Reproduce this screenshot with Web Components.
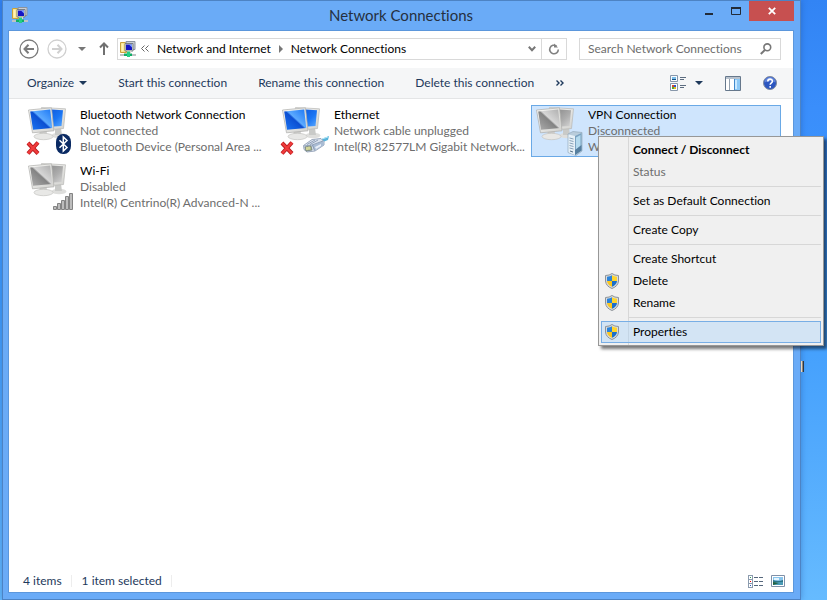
<!DOCTYPE html>
<html lang="en">
<head>
<meta charset="utf-8">
<title>Network Connections</title>
<style>
  html, body { height: 100%; }
  body {
    margin: 0;
    font: 12px/16px Lato, "Open Sans", sans-serif;
    font-variant-ligatures: none;
    color: #000;
    background: linear-gradient(180deg, #3284f4 0%, #3a8efb 18%, #3f9cfd 50%, #52aafd 75%, #66bbff 100%);
    overflow: hidden;
    --frame: #6aabf7;
    --line: #d9d9d9;
    --ink: #1e395b;
    --muted: #6d6d6d;
  }
  desktop-area { height: 100%; }
</style>
</head>
<body>
<desktop-area>
  <network-window>
    <title-bar slot="title">Network Connections</title-bar>
    <address-bar slot="nav" parent="Network and Internet" current="Network Connections"></address-bar>
    <command-bar slot="commands">
      <tool-button arrow>Organize</tool-button>
      <tool-button>Start this connection</tool-button>
      <tool-button>Rename this connection</tool-button>
      <tool-button>Delete this connection</tool-button>
      <tool-button slot="more" label="More commands"><ui-icon name="more"></ui-icon></tool-button>
      <tool-button slot="end" arrow label="Change your view"><ui-icon name="view"></ui-icon></tool-button>
      <tool-button slot="end" label="Preview pane"><ui-icon name="pane"></ui-icon></tool-button>
      <tool-button slot="end" label="Help"><ui-icon name="help"></ui-icon></tool-button>
    </command-bar>
    <connection-tile icon="on" badge="bluetooth" error>
      Bluetooth Network Connection
      <span slot="status">Not connected</span>
      <span slot="device">Bluetooth Device (Personal Area ...</span>
    </connection-tile>
    <connection-tile icon="on" badge="cable" error>
      Ethernet
      <span slot="status">Network cable unplugged</span>
      <span slot="device">Intel(R) 82577LM Gigabit Network...</span>
    </connection-tile>
    <connection-tile icon="off" badge="server" selected>
      VPN Connection
      <span slot="status">Disconnected</span>
      <span slot="device">W</span>
    </connection-tile>
    <connection-tile icon="off" badge="signal">
      Wi-Fi
      <span slot="status">Disabled</span>
      <span slot="device">Intel(R) Centrino(R) Advanced-N ...</span>
    </connection-tile>
    <status-bar slot="status"><span>4 items</span><span>1 item selected</span></status-bar>
  </network-window>
  <context-menu slot="menu">
    <menu-entry primary>Connect / Disconnect</menu-entry>
    <menu-entry disabled>Status</menu-entry>
    <menu-rule></menu-rule>
    <menu-entry>Set as Default Connection</menu-entry>
    <menu-rule></menu-rule>
    <menu-entry>Create Copy</menu-entry>
    <menu-rule></menu-rule>
    <menu-entry>Create Shortcut</menu-entry>
    <menu-entry shield>Delete</menu-entry>
    <menu-entry shield>Rename</menu-entry>
    <menu-rule></menu-rule>
    <menu-entry shield active>Properties</menu-entry>
  </context-menu>
</desktop-area>

<script>
const ICONS = {
  app: [16, 16, `
    <path d="M0.500 1.500h5l1 1v9h-6z" fill="#f6df83" stroke="#c9a23a"/>
    <path d="M1.500 2.500h2v8h-2z" fill="#fff3b4"/>
    <path d="M6 .5h9v8H7z" fill="#c9ced6" stroke="#8d949e"/>
    <path d="M5 2.500h8v7.500H5z" fill="#e8e9dc" stroke="#777f87"/>
    <path d="M6 3.500h6v5.500h-6z" fill="#1515c4"/><path d="M9 3.500h3v3z" fill="#7aa0ff"/>
    <path d="M7 10h4v2H7z" fill="#d8d8cf"/>
    <path d="M0 13h16v2H0z" fill="#bfc2c4"/><path d="M4 12.500h8v2.500H4z" fill="#0fae66"/><path d="M7 10.500h3v5.500h-3z" fill="#24cf84"/>`],
  back: [20, 20, `<circle cx="10" cy="10" r="9" fill="none" stroke="#7b7b7b" stroke-width="1.300"/><path d="M15 10H6M9.500 5.800L5.500 10l4 4.200" fill="none" stroke="#7b7b7b" stroke-width="2"/>`],
  forward: [20, 20, `<circle cx="10" cy="10" r="9" fill="none" stroke="#d0d0d0" stroke-width="1.300"/><path d="M5 10h9M10.500 5.800l4 4.200-4 4.200" fill="none" stroke="#d0d0d0" stroke-width="2"/>`],
  down: [8, 4, `<path d="M0 0h8L4 4z" fill="currentColor"/>`],
  up: [10, 13, `<path d="M5 13V2M1 5.500L5 1.500l4 4" fill="none" stroke="#707070" stroke-width="2"/>`],
  chevrons: [8, 7, `<path d="M3.500 .5l-3 3 3 3M7.500 .5l-3 3 3 3" fill="none" stroke="#666" stroke-width="1"/>`],
  crumb: [4, 8, `<path d="M0 0l4 4-4 4z" fill="#777"/>`],
  expand: [8, 6, `<path d="M.8 .8L4 4.200 7.200 .8" fill="none" stroke="#777" stroke-width="2"/>`],
  refresh: [12, 12, `<path d="M8.500 3A4.300 4.300 0 1 0 10.300 6.500" fill="none" stroke="#808080" stroke-width="1.600"/><path d="M6 .5v4h4z" fill="#808080"/>`],
  search: [12, 12, `<circle cx="7.300" cy="4.300" r="3.400" fill="none" stroke="#777" stroke-width="1.600"/><path d="M5 6.800L.8 11" stroke="#777" stroke-width="2"/>`],
  more: [8, 6, `<path d="M.5 .5L3 3 .5 5.500M4.500 .5L7 3 4.500 5.500" fill="none" stroke="#1e395b" stroke-width="1.400"/>`],
  view: [16, 16, `
    <path d="M.5 .5h7v6h-7z" fill="#f8fbff" stroke="#8797aa"/><path d="M2 2h4v2H2z" fill="#78bdea"/><path d="M2 4h4v1H2z" fill="#185486"/>
    <path d="M.5 8.500h7v7h-7z" fill="#fff" stroke="#8797aa"/><path d="M2 10h2v2H2z" fill="#d34a2e"/><path d="M4 10h2v2H4z" fill="#2f56c9"/><path d="M2 12h2v2H2z" fill="#57a536"/><path d="M4 12h2v2H4z" fill="#e5bd25"/>
    <path d="M10 2.500h6M10 4.500h4M10 10.500h6M10 12.500h4" stroke="#5c6c80"/>`],
  pane: [16, 15, `<path d="M.5 .5h15v14H.5z" fill="#fff" stroke="#66788c"/><path d="M1 1h14v2H1z" fill="#b8c2cd"/><path d="M4.500 3v11" stroke="#93a0ae"/><path d="M9 3h6v11H9z" fill="#8cc8f6"/><path d="M9.500 3v11" stroke="#4289cc"/><path d="M10 4h2v9h-2z" fill="#cae9ff"/>`],
  help: [14, 14, `<circle cx="7" cy="7" r="6.500" fill="#2c56c0" stroke="#7e899d"/><path d="M1.500 6.500a5.500 5.500 0 0 1 11 0Q7 4 1.500 6.500z" fill="#5f83da"/><path d="M4.800 5.400c0-3 4.600-3 4.600-.2C9.400 6.800 7.200 6.900 7.200 8.800M7.200 10v1.700" fill="none" stroke="#fff" stroke-width="1.600"/>`],
  minimize: [8, 10, `<path d="M0 7h8v2H0z" fill="#222b38"/>`],
  maximize: [10, 10, `<path d="M.5 1v7.500h9V1" fill="none" stroke="#222b38"/><path d="M0 1h10v2H0z" fill="#222b38"/>`],
  close: [8, 8, `<path d="M.8 .8l6.400 6.400M7.200 .8L.8 7.200" stroke="#fff" stroke-width="1.800"/>`],
  details: [15, 13, `
    <g fill="#fff" stroke="#8b9bae"><rect x=".5" y=".5" width="4" height="4"/><rect x=".5" y="4.500" width="4" height="4"/><rect x=".5" y="8.500" width="4" height="4"/></g>
    <path d="M2 2h1v1H2z" fill="#2f9b4b"/><path d="M2 6h1v1H2z" fill="#e00"/><path d="M2 10h1v1H2z" fill="#2358c4"/>
    <path d="M6 2.500h4M11 2.500h4M6 6.500h4M11 6.500h4M6 10.500h4M11 10.500h4" stroke="#56677c"/>`],
  large: [14, 12, `<path d="M.5 .5h13v11H.5z" fill="#fff" stroke="#7f90a8"/><path d="M2 2h10v8H2z" fill="#89c5ed"/><path d="M3 3h5v2H3z" fill="#e3f5ff"/><path d="M2 5q5 2 10 0v2H2z" fill="#2b7488"/><path d="M2 7h10v3H2z" fill="#4a9ab5"/><path d="M2 7l6 1-6 2z" fill="#23613f"/>`],
  shield: [14, 16, `
    <path d="M7 .5Q9.500 2.500 13.500 2.500V8Q13 13.300 7 15.500 1 13.300 .5 8V2.500Q4.500 2.500 7 .5z" fill="#d8dbdd" stroke="#8c9298"/>
    <path d="M7 2.300V8H2V3.800Q5 3.700 7 2.300z" fill="#2b83da"/><path d="M7 2.300V8h5V3.800Q9 3.700 7 2.300z" fill="#ffd52c"/>
    <path d="M2 8h5v5.800Q2.300 11.700 2 8z" fill="#fbc61d"/><path d="M12 8H7v5.800Q11.700 11.700 12 8z" fill="#1b6fcb"/>`],
  cross: [14, 14, `<path d="M2 2l10 10.500M12 1.500L2 12.500" stroke="#b81a1e" stroke-width="4"/><path d="M2 2l10 10.500M12 1.500L2 12.500" stroke="#f03c3c" stroke-width="2.400"/>`],
  bluetooth: [15, 20, `<rect width="15" height="20" rx="7" ry="8" fill="#0a2a63"/><path d="M3.500 6.200l7.500 7.300-3.700 3.500V3l3.700 3.500-7.500 7.300" fill="none" stroke="#fff" stroke-width="1.500"/>`],
  cable: [27, 18, `
    <path d="M18 4l4-2 5-2-1 4-5 2z" fill="#57b5dc"/><path d="M20 3l6-2" stroke="#b3e4f5"/>
    <path d="M1.500 9.500L10 3.500l9-1 3 3v3.500L13 15l-8 1-3-2.500z" fill="#dce4ef" stroke="#8796ad" stroke-width=".8"/>
    <path d="M10 9.500L21.500 5 22 9l-9.500 5.500z" fill="#a9bcd4"/>
    <path d="M2 10l8-1 11-4M10.500 9l2 5.500M5 8.500l8-4.500M8 8.500l8-4.500" fill="none" stroke="#7d90ab" stroke-width=".8"/>
    <path d="M3 11l6-1 1 4-6 1z" fill="#b1bd8b" stroke="#6d7b78" stroke-width=".8"/><path d="M5 11v3M7 10.500v3" stroke="#f2eeaa"/>
    <path d="M13 11l6-3v2l-5 3z" fill="#e8eff8"/>`],
  server: [16, 25, `
    <path d="M1 3l5-2.500 9 1V20l-6 4.500-8-3z" fill="#b9cddc" stroke="#93a9ba" stroke-width=".7"/>
    <path d="M1.500 3.500L8 5v19l-6.500-2.800z" fill="#e6f0f7"/><path d="M8 5l6.500-3v17.500L8 24z" fill="#7ba3c1"/>
    <path d="M9 6.500L13.500 4v11L9 20z" fill="#b4daee"/><path d="M8 19l6.500-5v5.500L8 24z" fill="#567f9f"/>
    <path d="M2.500 7l4 1M2.500 9.500l4 1M2.500 12l4 1M2.500 14.500l4 1M2.500 17l4 1" stroke="#7f9bb1" stroke-width=".9"/>
    <path d="M3 19.500l3 1v1l-3-1z" fill="#4d6980"/>`],
  signal: [21, 18, `<g fill="#bdbdbd" stroke="#848484"><path d="M.5 14.500h3v3h-3z"/><path d="M4.500 11.500h3v6h-3z"/><path d="M8.500 8.500h3v9h-3z"/><path d="M12.500 4.500h3v13h-3z"/><path d="M16.500 1.500h3v16h-3z"/></g>`],
};

const monitors = (dark, mid, light) => `
  <defs>
    <linearGradient id="s" x1="0" y1="1" x2="1" y2="0"><stop offset="0" stop-color="${mid}"/><stop offset=".48" stop-color="${dark}"/><stop offset=".54" stop-color="${light}"/><stop offset="1" stop-color="${mid}"/></linearGradient>
    <linearGradient id="r" x1="0" y1="0" x2="1" y2="1"><stop offset="0" stop-color="${dark}"/><stop offset=".6" stop-color="${mid}"/><stop offset="1" stop-color="${light}"/></linearGradient>
    <linearGradient id="f" x1="0" y1="0" x2="1" y2="1"><stop offset="0" stop-color="#f8f8f6"/><stop offset="1" stop-color="#d2d2cf"/></linearGradient>
  </defs>
  <ellipse cx="31" cy="28.500" rx="7.500" ry="2.800" fill="#dededc"/>
  <path d="M27 21h6l1 7h-7z" fill="#c9cac8"/>
  <path d="M13.500 .5L37.500 1.800 35.500 21.500l-18 1.500z" fill="url(#f)" stroke="#b8b8b5" stroke-width=".7"/>
  <path d="M16 2l19 1.300L33.500 19l-15 1z" fill="url(#r)"/>
  <path d="M11.500 24h7l1 5h-8z" fill="#cdcdcb"/>
  <ellipse cx="15.500" cy="29.500" rx="9.500" ry="3.200" fill="#e8e8e6" stroke="#c4c4c2" stroke-width=".7"/>
  <path d="M.5 3L23.500 .8l2.500 23-21.500 2z" fill="url(#f)" stroke="#aeaeab" stroke-width=".7"/>
  <path d="M2.200 4.500L22.200 2.600l2 18.400-19.200 1.700z" fill="url(#s)"/>`;
ICONS.on = [39, 35, monitors('#0c4fd2', '#1b76f4', '#5caaff')];
ICONS.off = [39, 35, monitors('#838383', '#adadad', '#d6d6d6')];

function define(name, html) {
  customElements.define(name, class extends HTMLElement {
    constructor() {
      super();
      this.attachShadow({ mode: 'open' });
    }
    connectedCallback() {
      if (this.shadowRoot.childNodes.length) return;
      const template = document.createElement('template');
      template.innerHTML = typeof html === 'function' ? html(this) : html;
      this.shadowRoot.append(template.content.cloneNode(true));
    }
  });
}

const RESET = `*{box-sizing:border-box} button{font:inherit;color:inherit;background:none;border:0;padding:0;margin:0;display:flex;align-items:center;text-align:left;white-space:nowrap}`;

define('ui-icon', el => {
  const [w, h, body] = ICONS[el.getAttribute('name')];
  return `<style>:host{display:inline-block;flex:none;line-height:0}svg{display:block}</style>
    <svg width="${w}" height="${h}" viewBox="0 0 ${w} ${h}" aria-hidden="true">${body}</svg>`;
});

define('desktop-area', `
  <style>
    :host{display:block;position:relative}
    .win{height:100%;padding:0 26px 0 2px}
    .shortcut{position:absolute;right:23px;top:361px;width:3px;height:11px;background:linear-gradient(90deg,#e9d6bd 40%,#2c3540 60%)}
    ::slotted(context-menu){position:absolute;left:598px;top:136px}
  </style>
  <div class="win"><slot></slot></div><div class="shortcut"></div><slot name="menu"></slot>`);

define('network-window', `
  <style>
    :host{display:flex;flex-direction:column;box-sizing:border-box;height:100%;background:var(--frame);border:1px solid #4d83c4;padding:0 6px 6px 5px;box-shadow:0 0 6px #1e4c9966}
    .client{flex:1;min-height:0;display:flex;flex-direction:column;background:#fff;border:1px solid #5c97dc}
    main{flex:1;display:grid;grid-template-columns:repeat(auto-fill,250px);grid-auto-rows:52px;gap:4px;align-content:start;padding:6px 12px 0 14px}
  </style>
  <slot name="title"></slot>
  <div class="client">
    <slot name="nav"></slot><slot name="commands"></slot>
    <main><slot></slot></main>
    <slot name="status"></slot>
  </div>`);

define('title-bar', `
  <style>
    ${RESET}
    :host{display:grid;grid-template-columns:1fr auto 1fr;height:29px;color:#25303f}
    h1{font-size:15px;line-height:29px;font-weight:400;margin:0}
    .app{padding:6px 0 0 4px}
    .ctl{display:flex;justify-content:flex-end;align-items:flex-start}
    button{height:20px;width:27px;justify-content:center}
    button.close{width:45px;background:#c75050}
  </style>
  <div class="app"><ui-icon name="app"></ui-icon></div>
  <h1><slot></slot></h1>
  <div class="ctl">
    <button aria-label="Minimize"><ui-icon name="minimize"></ui-icon></button>
    <button aria-label="Maximize"><ui-icon name="maximize"></ui-icon></button>
    <button class="close" aria-label="Close"><ui-icon name="close"></ui-icon></button>
  </div>`);

define('address-bar', el => `
  <style>
    ${RESET}
    :host{display:flex;align-items:center;box-sizing:border-box;height:37px;padding:0 12px 2px 10px;color:#777}
    .back{margin-right:8px}.fwd{margin-right:11px}.hist{margin-right:13px}.up{margin-right:8px}
    nav{flex:1;min-width:0;height:22px;border:1px solid var(--line);display:flex;align-items:center;color:#000}
    nav>ui-icon{margin:0 5px 0 2px}
    a{color:inherit;text-decoration:none;white-space:nowrap}
    .over{margin-right:8px}.sep{margin:0 8px}
    .drop{margin-left:auto;padding:0 5px;height:20px}
    .ref{width:25px;height:20px;border-left:1px solid var(--line);justify-content:center}
    label{width:202px;height:22px;margin-left:12px;border:1px solid var(--line);display:flex;align-items:center;padding:0 8px}
    input{flex:1;min-width:0;border:0;padding:0;font:inherit;outline:0;background:none}
    input::placeholder{color:#6d6d6d;opacity:1}
  </style>
  <button class="back" aria-label="Back"><ui-icon name="back"></ui-icon></button>
  <button class="fwd" aria-label="Forward"><ui-icon name="forward"></ui-icon></button>
  <button class="hist" aria-label="Recent locations"><ui-icon name="down"></ui-icon></button>
  <button class="up" aria-label="Up"><ui-icon name="up"></ui-icon></button>
  <nav aria-label="Address">
    <ui-icon name="app"></ui-icon>
    <button class="over" aria-label="Earlier locations"><ui-icon name="chevrons"></ui-icon></button>
    <a href="#internet">${el.getAttribute('parent')}</a>
    <button class="sep" aria-label="Browse"><ui-icon name="crumb"></ui-icon></button>
    <a href="#connections">${el.getAttribute('current')}</a>
    <button class="drop" aria-label="Previous locations"><ui-icon name="expand"></ui-icon></button>
    <button class="ref" aria-label="Refresh"><ui-icon name="refresh"></ui-icon></button>
  </nav>
  <label><input type="text" aria-label="Search" placeholder="Search Network Connections"><ui-icon name="search"></ui-icon></label>`);

define('command-bar', `
  <style>
    :host{display:flex;align-items:center;gap:22px;box-sizing:border-box;height:31px;background:#f5f6f7;border-bottom:1px solid #e4e5e6;color:var(--ink);padding:0 16px 0 18px}
    div{display:flex;align-items:center;gap:31px}
    .end{gap:22px;margin-left:auto}
  </style>
  <div><slot></slot></div><slot name="more"></slot><div class="end"><slot name="end"></slot></div>`);

define('tool-button', el => `
  <style>${RESET}:host{display:block} button{gap:${el.hasAttribute('label') ? 9 : 5}px}</style>
  <button ${el.hasAttribute('label') ? `aria-label="${el.getAttribute('label')}"` : ''}><slot></slot>${el.hasAttribute('arrow') ? '<ui-icon name="down"></ui-icon>' : ''}</button>`);

define('connection-tile', el => `
  <style>
    :host{display:flex;box-sizing:border-box;border:1px solid transparent;padding:1px 0 0 4px;min-width:0}
    :host([selected]){background:#cfe5fd;border-color:#6aa9e6}
    .pic{position:relative;width:48px;height:48px;margin-right:3px;flex:none}
    .badge{position:absolute;right:5px;bottom:1px}
    :host([badge=cable]) .badge{right:1px}
    :host([badge=signal]) .badge{right:2px}
    :host([badge=server]) .badge{right:1px;bottom:-1px}
    .err{position:absolute;left:-2px;bottom:0}
    .text{min-width:0;padding-left:1px}
    .text div{white-space:nowrap;overflow:hidden}
    .dim{color:var(--muted)}
  </style>
  <div class="pic"><ui-icon name="${el.getAttribute('icon')}"></ui-icon>
    ${el.hasAttribute('error') ? '<ui-icon class="err" name="cross"></ui-icon>' : ''}
    <ui-icon class="badge" name="${el.getAttribute('badge')}"></ui-icon></div>
  <div class="text"><div><slot></slot></div><div class="dim"><slot name="status"></slot></div><div class="dim"><slot name="device"></slot></div></div>`);

define('status-bar', `
  <style>
    ${RESET}
    :host{display:flex;align-items:center;height:22px;padding:0 8px 0 14px;color:var(--ink)}
    ::slotted(span){border-right:1px solid #ededed;padding-right:9px;margin-right:10px;line-height:12px}
    .views{display:flex;align-items:center;gap:8px;margin-left:auto}
  </style>
  <slot></slot>
  <div class="views"><button aria-label="Details"><ui-icon name="details"></ui-icon></button><button aria-label="Large icons"><ui-icon name="large"></ui-icon></button></div>`);

define('context-menu', `
  <style>
    :host{display:block;box-sizing:border-box;width:226px;padding:2px;border:1px solid #979797;background:linear-gradient(90deg,#f0f0f0 29px,#d7d7d7 29px,#d7d7d7 30px,#f0f0f0 30px);box-shadow:3px 3px 3px #0008}
  </style>
  <div role="menu"><slot></slot></div>`);

define('menu-entry', el => `
  <style>
    ${RESET}
    :host{display:block}
    button{width:100%;height:22px;border:1px solid transparent;padding-right:8px}
    .ico{display:flex;width:31px;padding-left:3px;flex:none}
    :host([primary]){font-weight:700}
    button:disabled{color:var(--muted)}
    :host([active]) button{background:#a8d2fb66;border-color:#78aee5}
  </style>
  <button role="menuitem" ${el.hasAttribute('disabled') ? 'disabled' : ''}><span class="ico">${el.hasAttribute('shield') ? '<ui-icon name="shield"></ui-icon>' : ''}</span><slot></slot></button>`);

define('menu-rule', `<style>:host{display:block;padding:3px 0 3px 28px}hr{margin:0;border:0;height:1px;background:#d7d7d7}</style><hr>`);
</script>
</body>
</html>
